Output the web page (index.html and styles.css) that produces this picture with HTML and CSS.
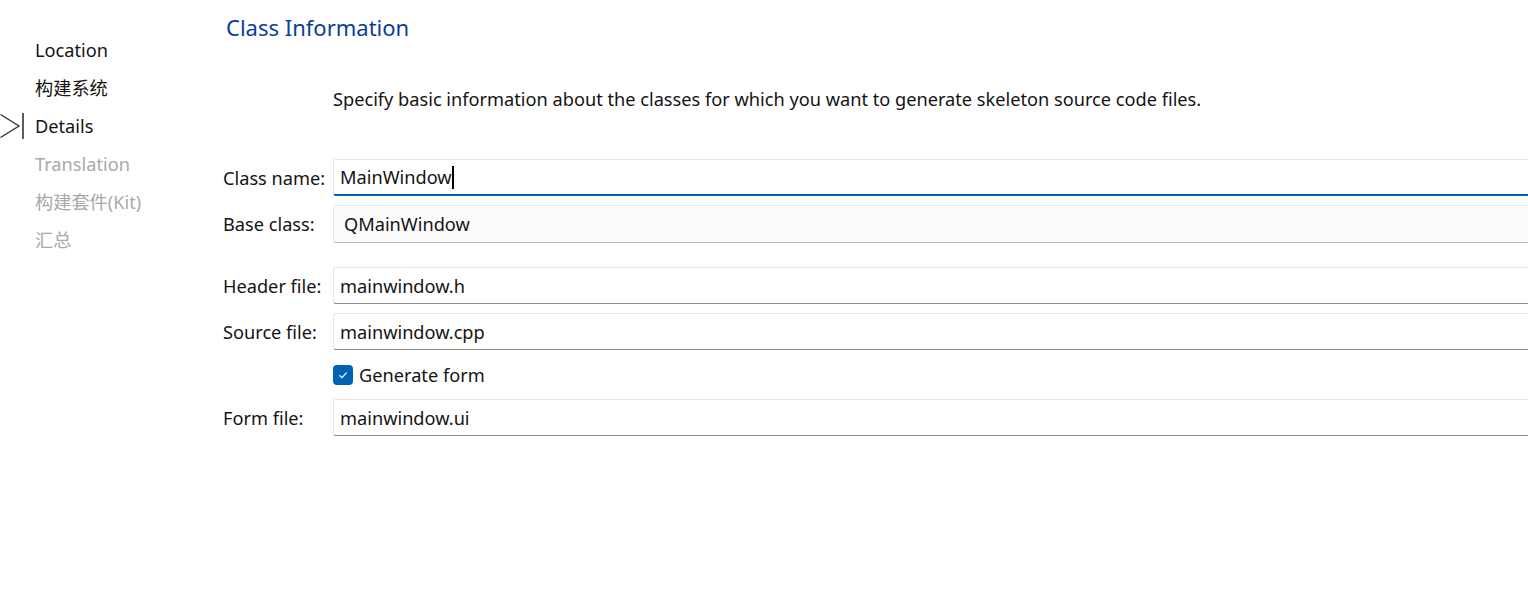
FILE: index.html
```html
<!DOCTYPE html>
<html>
<head>
<meta charset="utf-8">
<link rel="stylesheet" href="styles.css">
</head>
<body>
<div class="page">
  <nav class="sidebar">
    <div class="step done">Location</div>
    <div class="step done">构建系统</div>
    <div class="step current">
      <svg class="marker" width="26" height="28" viewBox="0 0 26 28">
        <path d="M0.5 2.5 L19 14 L0.5 25.5" fill="none" stroke="#333" stroke-width="1.4"/>
        <path d="M23 1 V27" stroke="#333" stroke-width="1.6"/>
      </svg>
      Details
    </div>
    <div class="step todo">Translation</div>
    <div class="step todo">构建套件(Kit)</div>
    <div class="step todo">汇总</div>
  </nav>
  <main class="main">
    <h1 class="title">Class Information</h1>
    <p class="desc">Specify basic information about the classes for which you want to generate skeleton source code files.</p>
    <div class="form">
      <label class="lbl">Class name:</label>
      <div class="field focus">MainWindow<span class="caret"></span></div>
      <label class="lbl">Base class:</label>
      <div class="field combo">QMainWindow</div>
      <div class="spacer"></div>
      <label class="lbl">Header file:</label>
      <div class="field">mainwindow.h</div>
      <label class="lbl">Source file:</label>
      <div class="field">mainwindow.cpp</div>
      <div></div>
      <div class="check-row">
        <span class="checkbox">
          <svg width="12" height="12" viewBox="0 0 12 12"><path d="M2.5 6.3 L5 8.6 L9.6 3.6" fill="none" stroke="#fff" stroke-width="1.2"/></svg>
        </span>
        Generate form
      </div>
      <label class="lbl">Form file:</label>
      <div class="field">mainwindow.ui</div>
    </div>
  </main>
</div>
</body>
</html>
```
FILE: styles.css
```css
html, body {
  margin: 0;
  padding: 0;
  background: #ffffff;
  overflow: hidden;
}
body {
  font-family: "Noto Sans", "Noto Sans CJK SC", sans-serif;
  font-size: 18.2px;
  color: #141414;
}
.page {
  display: flex;
  width: 1540px;
}
.sidebar {
  width: 223px;
  flex: none;
  padding-top: 37px;
}
.step {
  position: relative;
  height: 38px;
  line-height: 26px;
  padding-left: 35px;
}
.step.done, .step.current { color: #141414; }
.step.todo { color: #a9a9a9; }
.marker {
  position: absolute;
  left: 0;
  top: -1px;
}
.main {
  flex: 1;
}
.title {
  margin: 0;
  padding: 12px 0 0 3px;
  height: 30px;
  line-height: 30px;
  font-size: 22px;
  font-weight: normal;
  color: #0b3d9c;
}
.desc {
  margin: 44px 0 0 110px;
  line-height: 26px;
  height: 26px;
}
.form {
  display: grid;
  grid-template-columns: 110px 1fr;
  row-gap: 9px;
  margin-top: 47px;
  align-items: center;
}
.lbl {
  line-height: 26px;
}
.spacer {
  grid-column: 1 / 3;
  height: 6px;
}
.field {
  box-sizing: border-box;
  height: 37px;
  padding-left: 6px;
  border: 1px solid #e6e6e6;
  border-bottom: 1px solid #8a8a8a;
  border-right: none;
  border-radius: 3px 0 0 3px;
  background: #ffffff;
  display: flex;
  align-items: center;
}
.field.focus {
  border-bottom: 2px solid #0063b1;
}
.field.combo {
  background: #fbfbfb;
  border-bottom-color: #b8b8b8;
  padding-left: 10px;
  height: 38px;
}
.caret {
  display: inline-block;
  width: 2px;
  height: 23px;
  background: #000;
}
.check-row {
  display: flex;
  align-items: center;
  gap: 6px;
  height: 31px;
}
.checkbox {
  width: 20px;
  height: 20px;
  box-sizing: border-box;
  border-radius: 4px;
  background: #0063b1;
  display: flex;
  align-items: center;
  justify-content: center;
}
```
